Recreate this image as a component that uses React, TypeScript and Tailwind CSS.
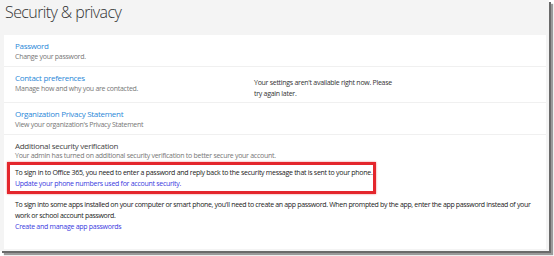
import React from 'react';

const font = { fontFamily: '"Open Sans", "Noto Sans", sans-serif' };

const SettingRow: React.FC<{ title: string; desc: string; height: string; children?: React.ReactNode }> = ({ title, desc, height, children }) => (
  <div className={`flex border-b border-[#f0f0f0] pl-[11px] pt-[5px] ${height}`}>
    <div className="w-[239px]">
      <div className="text-[8px] leading-[11px] tracking-[-0.3px] text-[#2b88d8]">{title}</div>
      <div className="text-[7px] leading-[11px] tracking-[-0.28px] text-[#777]">{desc}</div>
    </div>
    {children}
  </div>
);

export default function App() {
  return (
    <div className="w-[554px] h-[256px] bg-white" style={font}>
      <div className="w-[549px] h-[251px] bg-[#f4f4f4] shadow-[2px_2px_0_#6a6a6a,4px_4px_1px_#9a9a9a] flex flex-col">
        <h1 className="pl-[5px] pt-[1px] h-[35px] text-[16px] leading-[22px] font-light tracking-[-0.6px] text-[#333]">Security &amp; privacy</h1>
        <div className="ml-[4px] w-[542px] h-[214px] bg-white">
          <SettingRow title="Password" desc="Change your password." height="h-[32px]" />
          <SettingRow title="Contact preferences" desc="Manage how and why you are contacted." height="h-[36px]">
            <p className="w-[145px] pt-[5px] text-[7px] leading-[11px] tracking-[-0.28px] text-[#333]">
              Your settings aren't available right now. Please try again later.
            </p>
          </SettingRow>
          <SettingRow title="Organization Privacy Statement" desc="View your organization's Privacy Statement" height="h-[32px]" />
          <div className="pt-[5px] text-[7px] tracking-[-0.28px]">
            <div className="pl-[11px] text-[8px] leading-[11px] tracking-[-0.3px] text-[#444]">Additional security verification</div>
            <div className="pl-[11px] leading-[9px] text-[#777]">
              Your admin has turned on additional security verification to better secure your account.
            </div>
            <div className="ml-[3px] mt-[2px] w-[369px] h-[32px] border-[3px] border-[#e4262c] pl-[5px] pt-[2px] shadow-[0_0_2px_#e88]">
              <div className="leading-[11px] text-[#222]">
                To sign in to Office 365, you need to enter a password and reply back to the security message that is sent to your phone.
              </div>
              <div className="leading-[11px] text-[#3a3ae0]">Update your phone numbers used for account security.</div>
            </div>
            <div className="pl-[11px] pt-[5px] leading-[11px]">
              <p className="w-[531px] tracking-[-0.33px] text-[#222]">
                To sign into some apps installed on your computer or smart phone, you'll need to create an app password. When prompted by the app, enter the app password instead of your work or school account password.
              </p>
              <div className="text-[#3a3ae0]">Create and manage app passwords</div>
            </div>
          </div>
        </div>
      </div>
    </div>
  );
}
